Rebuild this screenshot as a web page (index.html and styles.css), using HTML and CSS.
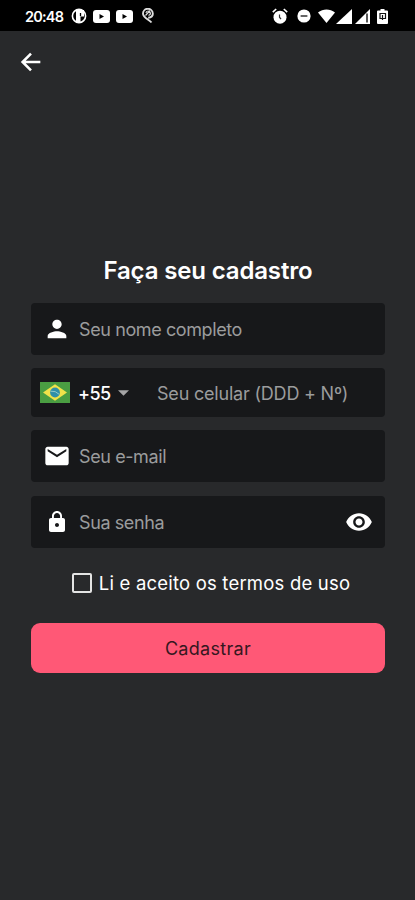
FILE: index.html
```html
<!DOCTYPE html>
<html lang="pt-BR">
<head>
    <meta charset="UTF-8">
    <meta name="viewport" content="width=device-width, initial-scale=1.0">
    <title>Cadastro</title>
    <link rel="stylesheet" href="styles.css">
</head>
<body>
    <header class="status-bar">
        <span class="clock">20:48</span>
        <div class="status-left">
            <svg width="16" height="16" viewBox="0 0 16 16"><circle cx="8" cy="8" r="6.6" fill="none" stroke="#fff" stroke-width="1.6"/><path d="M5 2h8v6.5H9.5V14H5z" fill="#fff"/><path d="M9.5 5v3.2" stroke="#000" stroke-width="1.3"/></svg>
            <svg width="17" height="13" viewBox="0 0 17 13"><rect width="17" height="13" rx="3" fill="#fff"/><path d="M6.5 4v5l4.5-2.5z" fill="#000"/></svg>
            <svg width="17" height="13" viewBox="0 0 17 13"><rect width="17" height="13" rx="3" fill="#fff"/><path d="M6.5 4v5l4.5-2.5z" fill="#000"/></svg>
            <svg class="pin" width="12" height="16" viewBox="0 0 12 16"><path d="M9.5 14.5C7.5 12 1 9.5 1 5.8A4.8 4.8 0 0 1 10.8 5.5C11 8.2 8.2 9.5 6.2 9.8" fill="none" stroke="#ddd" stroke-width="1.9"/><path d="M3.5 7.5l4.5-5M4 5a2.2 2.2 0 1 1 2.5 2.4" fill="none" stroke="#ddd" stroke-width="1.2"/></svg>
        </div>
        <div class="status-right">
            <svg width="16" height="16" viewBox="0 0 16 16"><circle cx="8" cy="9.2" r="6.5" fill="#fff"/><path d="M.8 4.2 4.2 1M15.2 4.2 11.8 1" stroke="#fff" stroke-width="1.6"/><path d="M7.5 6.5v2.7l1.5 2" fill="none" stroke="#333" stroke-width="1.2"/></svg>
            <svg class="dnd" width="14" height="14" viewBox="0 0 14 14"><circle cx="7" cy="7" r="6.6" fill="#fff"/><path d="M3.6 7h6.8" stroke="#666" stroke-width="2"/></svg>
            <svg class="wifi" width="17" height="14" viewBox="0 0 17 14"><path d="M0 3.4C5 -.6 12-.6 17 3.4L8.5 14z" fill="#fff"/></svg>
            <svg class="signal" width="16" height="15" viewBox="0 0 16 15"><path d="M0 15 16 0v15z" fill="#fff"/></svg>
            <svg class="signal-two" width="15" height="15" viewBox="0 0 15 15"><path d="M0 15 15 0v15z" fill="#fff"/><path d="M12 4.5v9" stroke="#111" stroke-width="1.4"/></svg>
            <svg width="11" height="15" viewBox="0 0 11 15"><path d="M3.5 0h4v1.5H10q1 0 1 1V14q0 1-1 1H1q-1 0-1-1V2.5q0-1 1-1h2.5z" fill="#fff"/><path d="M3 4.5h5.5v5H3zM5.5 6v5" fill="none" stroke="#111" stroke-width="1.2"/></svg>
        </div>
    </header>

    <nav class="app-bar">
        <a href="#" class="back-btn" aria-label="Voltar">
            <svg width="28" height="28" viewBox="0 0 24 24"><path d="M20 12H5.3M12 4.8 4.8 12l7.2 7.2" fill="none" stroke="#fff" stroke-width="2.2"/></svg>
        </a>
    </nav>

    <main class="container">
        <h1>Faça seu cadastro</h1>
        <form class="signup-form">
            <div class="field">
                <svg class="field-icon" width="28" height="28" viewBox="0 0 24 24"><path d="M12 12c2.21 0 4-1.79 4-4s-1.79-4-4-4-4 1.79-4 4 1.79 4 4 4zm0 2c-2.67 0-8 1.34-8 4v2h16v-2c0-2.66-5.33-4-8-4z"/></svg>
                <input type="text" class="name-input" placeholder="Seu nome completo">
            </div>
            <div class="field phone-field">
                <svg class="flag" width="30" height="21" viewBox="0 0 30 21"><rect width="30" height="21" fill="#4a9e42"/><path d="M15 2.3 27 10.5 15 18.7 3 10.5z" fill="#f0e34a"/><circle cx="15" cy="10.5" r="4.9" fill="#2f8fa8"/><path d="M10.5 9.2Q15.5 8.5 19.3 12.4" fill="none" stroke="#8fc9cb" stroke-width="1"/></svg>
                <span class="country-code">+55</span>
                <svg class="caret" width="11" height="6" viewBox="0 0 12 6"><path d="M0 0h12L6 6z" fill="#a5a5a6"/></svg>
                <input type="tel" class="phone-input" placeholder="Seu celular (DDD + Nº)">
            </div>
            <div class="field">
                <svg class="field-icon" width="28" height="28" viewBox="0 0 24 24"><path d="M20 4H4c-1.1 0-2 .9-2 2v12c0 1.1.9 2 2 2h16c1.1 0 2-.9 2-2V6c0-1.1-.9-2-2-2zm0 4-8 5-8-5V6l8 5 8-5v2z"/></svg>
                <input type="email" class="email-input" placeholder="Seu e-mail">
            </div>
            <div class="field password-field">
                <svg class="field-icon lock" width="24" height="24" viewBox="0 0 24 24"><path d="M18 8h-1V6c0-2.76-2.24-5-5-5S7 3.24 7 6v2H6c-1.1 0-2 .9-2 2v10c0 1.1.9 2 2 2h12c1.1 0 2-.9 2-2V10c0-1.1-.9-2-2-2zm-6 9c-1.1 0-2-.9-2-2s.9-2 2-2 2 .9 2 2-.9 2-2 2zm3.1-9H8.9V6c0-1.71 1.39-3.1 3.1-3.1s3.1 1.39 3.1 3.1v2z"/></svg>
                <input type="password" class="password-input" placeholder="Sua senha">
                <svg class="field-icon eye" width="28" height="28" viewBox="0 0 24 24"><path d="M12 4.5C7 4.5 2.73 7.61 1 12c1.73 4.39 6 7.5 11 7.5s9.27-3.11 11-7.5c-1.73-4.39-6-7.5-11-7.5zM12 17c-2.76 0-5-2.24-5-5s2.24-5 5-5 5 2.24 5 5-2.24 5-5 5zm0-8c-1.66 0-3 1.34-3 3s1.34 3 3 3 3-1.34 3-3-1.34-3-3-3z"/></svg>
            </div>
            <label class="terms">
                <input type="checkbox">
                <span>Li e aceito os termos de uso</span>
            </label>
            <button type="button" class="submit-btn">Cadastrar</button>
        </form>
    </main>
</body>
</html>
```
FILE: styles.css
```css
* {
    box-sizing: border-box;
}
body {
    font-family: Inter, "Liberation Sans", sans-serif;
    background-color: #28292b;
    color: #fff;
    margin: 0;
    min-height: 900px;
}
svg {
    display: block;
    flex-shrink: 0;
}
.status-bar {
    height: 31px;
    background-color: #000;
    display: flex;
    align-items: center;
    padding: 1px 27px 0 25px;
}
.clock {
    width: 39px;
    font-size: 14.5px;
    font-weight: 600;
    letter-spacing: -0.8px;
    white-space: nowrap;
}
.status-left {
    display: flex;
    align-items: center;
    gap: 6px;
    margin-left: 7px;
}
.pin {
    margin-left: 3px;
}
.status-right {
    display: flex;
    align-items: center;
    margin-left: auto;
}
.dnd {
    margin-left: 9px;
}
.wifi {
    margin-left: 7px;
}
.signal {
    margin-left: 1px;
}
.signal-two {
    margin: 0 7px 0 3px;
}
.app-bar {
    height: 61px;
    padding: 17px;
}
.back-btn {
    display: block;
    width: 28px;
}
.container {
    padding: 164px 30px 0 31px;
}
h1 {
    margin: 0 0 17px;
    font-size: 24px;
    line-height: 30px;
    font-weight: 600;
    letter-spacing: -0.15px;
    text-align: center;
}
.signup-form {
    display: flex;
    flex-direction: column;
}
.field {
    display: flex;
    align-items: center;
    height: 52px;
    margin-bottom: 13px;
    padding: 0 12px;
    background-color: #17181a;
    border-radius: 4px;
}
.field input {
    flex: 1;
    min-width: 0;
    margin-left: 8px;
    padding: 0;
    border: none;
    outline: none;
    background: transparent;
    color: #fff;
    font-family: inherit;
    font-size: 18px;
    letter-spacing: -0.4px;
}
.field input::placeholder {
    color: #9b9c9d;
    opacity: 1;
}
.field-icon {
    fill: #fff;
}
.phone-field {
    height: 49px;
    padding: 1px 9px 0;
}
.flag {
    margin-bottom: 2px;
}
.country-code {
    margin-left: 8px;
    width: 34px;
    font-size: 18px;
    font-weight: 500;
    letter-spacing: -0.6px;
}
.caret {
    margin-left: 6px;
}
.field .phone-input {
    margin-left: 28px;
    letter-spacing: -0.2px;
}
.password-field {
    margin-top: 1px;
}
.lock {
    margin: 0 2px;
}
.terms {
    display: flex;
    align-items: center;
    justify-content: center;
    gap: 7px;
    height: 24px;
    margin: 10px 0 28px;
    padding-left: 6px;
    font-size: 18.5px;
    letter-spacing: 0.2px;
    white-space: nowrap;
}
.terms input {
    appearance: none;
    width: 20px;
    height: 20px;
    margin: 0;
    border: 2px solid #e4e4e4;
    border-radius: 2px;
}
.submit-btn {
    height: 50px;
    border: none;
    border-radius: 9px;
    background-color: #ff5876;
    color: #35171f;
    font-family: inherit;
    font-size: 18px;
    letter-spacing: 0.3px;
    cursor: pointer;
}
```
